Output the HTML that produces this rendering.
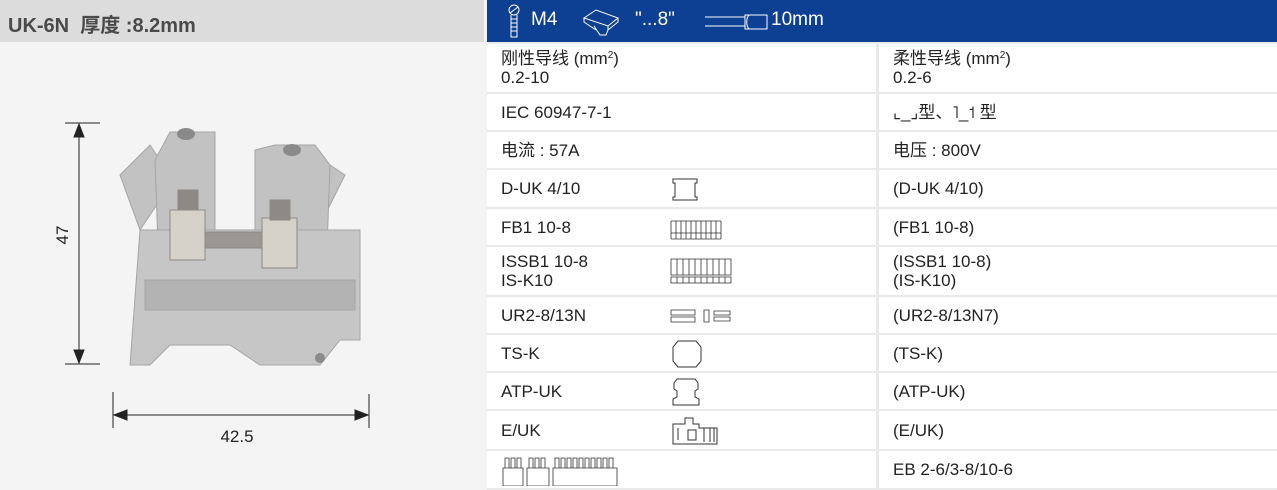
<!DOCTYPE html>
<html><head><meta charset="utf-8"><style>
*{margin:0;padding:0;box-sizing:border-box}
body{width:1277px;height:490px;background:#f4f4f4;position:relative;overflow:hidden;font-family:"Liberation Sans","Noto Sans CJK SC",sans-serif;color:#222}
.hl{position:absolute;left:0;top:0;width:484px;height:42px;background:#dcdcdc;font-weight:bold;font-size:20px;color:#4a4a4a;padding:9px 0 0 8px}
.hb{position:absolute;left:487px;top:0;width:790px;height:42px;background:#0d3f92;color:#fff;font-size:19px}
.hb span{position:absolute;top:9px}
.tbl{position:absolute;left:487px;top:42px;width:790px;height:448px;background:#eaeaea}
.r{position:absolute;left:0;width:790px}
.c{position:absolute;top:0;bottom:0;background:#fff;font-size:17px;line-height:19px;padding:0 0 0 14px;display:flex;align-items:center}
.c1{left:0;width:389px}.c2{left:392px;width:398px}
sup{font-size:10px;line-height:0;vertical-align:6px}
.ic{position:absolute;left:183px}
</style></head><body>
<div class="hl">UK-6N&nbsp; 厚度 :8.2mm</div>
<div class="hb">
<svg style="position:absolute;left:20px;top:4px" width="14" height="34" viewBox="0 0 14 34" fill="none" stroke="#fff" stroke-width="1"><ellipse cx="7" cy="6" rx="5" ry="5"/><path d="M3 9l8-6M4 11v22h6V11M4 15h6M4 19h6M4 23h6M4 27h6"/></svg>
<span style="left:44px">M4</span>
<svg style="position:absolute;left:95px;top:8px" width="40" height="28" viewBox="0 0 40 28" fill="none" stroke="#fff" stroke-width="1"><path d="M2 10l12-8 22 8-10 8zM2 10v4l12 8M26 18v4l10-8v-4M12 18l6 9h6l2-5"/></svg>
<span style="left:148px">"...8"</span>
<svg style="position:absolute;left:218px;top:10px" width="66" height="22" viewBox="0 0 66 22" fill="none" stroke="#fff" stroke-width="1"><path d="M0 7h40M0 16h40M40 5h22v14H40zM44 5c-3 3-3 11 0 14"/></svg>
<span style="left:284px">10mm</span>
</div>
<div class="tbl">
<div class="r" style="top:2px;height:48px"><div class="c c1"><div>刚性导线 (mm<sup>2</sup>)<br>0.2-10</div></div><div class="c c2"><div>柔性导线 (mm<sup>2</sup>)<br>0.2-6</div></div></div>
<div class="r" style="top:52px;height:36px"><div class="c c1"><div>IEC 60947-7-1</div></div><div class="c c2"><div>⌞_⌟型、˥_˦ 型</div></div></div>
<div class="r" style="top:90px;height:36px"><div class="c c1"><div>电流 : 57A</div></div><div class="c c2"><div>电压 : 800V</div></div></div>
<div class="r" style="top:128px;height:37px"><div class="c c1"><div>D-UK 4/10</div><svg class="ic" style="top:6px" width="30" height="26" viewBox="0 0 30 26" fill="none" stroke="#333"><path d="M3 3h24v4h-2v14h2v3H3v-3h2V7H3z"/></svg></div><div class="c c2"><div>(D-UK 4/10)</div></div></div>
<div class="r" style="top:167px;height:36px"><div class="c c1"><div>FB1 10-8</div><svg class="ic" style="top:10px" width="52" height="22" viewBox="0 0 52 22" fill="none" stroke="#333" stroke-width=".8"><path d="M1 2h50M1 14h50M1 20h50M1 2v18M51 2v18M6 2v18M11 2v18M16 2v18M21 2v18M26 2v18M31 2v18M36 2v18M41 2v18M46 2v18"/></svg></div><div class="c c2"><div>(FB1 10-8)</div></div></div>
<div class="r" style="top:205px;height:48px"><div class="c c1"><div>ISSB1 10-8<br>IS-K10</div><svg class="ic" style="top:10px" width="62" height="28" viewBox="0 0 62 28" fill="none" stroke="#333" stroke-width=".8"><path d="M1 2h60v16H1zM1 20h60v6H1zM7 2v16M13 2v16M19 2v16M25 2v16M31 2v16M37 2v16M43 2v16M49 2v16M55 2v16M7 20v6M13 20v6M19 20v6M25 20v6M31 20v6M37 20v6M43 20v6M49 20v6M55 20v6"/></svg></div><div class="c c2"><div>(ISSB1 10-8)<br>(IS-K10)</div></div></div>
<div class="r" style="top:255px;height:36px"><div class="c c1"><div>UR2-8/13N</div><svg class="ic" style="top:11px" width="62" height="16" viewBox="0 0 62 16" fill="none" stroke="#333" stroke-width=".8"><path d="M1 2h24v5H1zM1 9h24v5H1zM34 2h5v12h-5zM44 3h16v4H44zM44 9h16v4H44z"/></svg></div><div class="c c2"><div>(UR2-8/13N7)</div></div></div>
<div class="r" style="top:293px;height:36px"><div class="c c1"><div>TS-K</div><svg class="ic" style="top:4px" width="34" height="30" viewBox="0 0 34 30" fill="none" stroke="#333"><path d="M8 2h18l5 6v14l-5 6H8l-5-6V8z"/></svg></div><div class="c c2"><div>(TS-K)</div></div></div>
<div class="r" style="top:331px;height:36px"><div class="c c1"><div>ATP-UK</div><svg class="ic" style="top:4px" width="34" height="30" viewBox="0 0 34 30" fill="none" stroke="#333"><path d="M7 2h18l3 4v6l-3 2v6l4 2v6H3v-6l4-2v-6l-3-2V6z"/></svg></div><div class="c c2"><div>(ATP-UK)</div></div></div>
<div class="r" style="top:369px;height:38px"><div class="c c1"><div>E/UK</div><svg class="ic" style="top:3px" width="50" height="32" viewBox="0 0 50 32" fill="none" stroke="#333"><path d="M3 10h12V4h8v6h6v4h18v16H3zM8 14v12M18 16h8v10h-8zM34 14v14M40 14v14M44 14v14"/></svg></div><div class="c c2"><div>(E/UK)</div></div></div>
<div class="r" style="top:409px;height:37px"><div class="c c1"><svg width="118" height="32" viewBox="0 0 118 32" fill="none" stroke="#333" stroke-width=".8"><path d="M2 14h20v18H2zM26 14h22v18H26zM52 14h64v18H52zM4 4h4v10H4zM10 4h4v10h-4zM16 4h4v10h-4zM28 4h4v10h-4zM34 4h4v10h-4zM40 4h4v10h-4zM54 4h4v10h-4zM60 4h4v10h-4zM66 4h4v10h-4zM72 4h4v10h-4zM78 4h4v10h-4zM84 4h4v10h-4zM90 4h4v10h-4zM96 4h4v10h-4zM102 4h4v10h-4zM108 4h4v10h-4z"/></svg></div><div class="c c2"><div>EB 2-6/3-8/10-6</div></div></div>
</div>
<svg style="position:absolute;left:0;top:42px" width="484" height="448" viewBox="0 42 484 448">
<g stroke="#222" stroke-width="1" fill="#222">
<line x1="65" y1="123" x2="100" y2="123"/><line x1="65" y1="364" x2="100" y2="364"/>
<line x1="79" y1="130" x2="79" y2="357"/><path d="M79 124l-5 13h10zM79 363l-5-13h10z"/>
<line x1="113" y1="392" x2="113" y2="428"/><line x1="369" y1="394" x2="369" y2="428"/>
<line x1="120" y1="415" x2="362" y2="415"/><path d="M114 415l13-5v10zM368 415l-13-5v10z"/>
</g>
<text x="68" y="235" transform="rotate(-90 68 235)" text-anchor="middle" font-size="17" fill="#222" font-family="Liberation Sans">47</text>
<text x="237" y="442" text-anchor="middle" font-size="17" fill="#222" font-family="Liberation Sans">42.5</text>
<g fill="#c2c2c2" stroke="#a5a5a5" stroke-width="1">
<path d="M120 175l30-30 10 15v40l-20 30z"/>
<path d="M345 175l-30-20-10 20 20 40z"/>
<path d="M155 160l15-28h45v170h-55z"/>
<path d="M255 150l20-5h40l15 20-5 140h-70z"/>
<path d="M140 230h220v110h-20l-20 25h-60l-30-20h-60l-20 20h-20z" fill="#c6c6c6"/>
<path d="M145 280h210v30H145z" fill="#b3b3b3"/>
</g>
<g fill="#d6d1c9" stroke="#8d8a85">
<rect x="170" y="210" width="35" height="50"/><rect x="262" y="218" width="35" height="50"/>
<rect x="205" y="232" width="57" height="16" fill="#9b9892"/>
<rect x="178" y="190" width="20" height="20" fill="#8d8a85"/><rect x="270" y="200" width="20" height="20" fill="#8d8a85"/>
</g>
<g fill="#8a8a8a"><ellipse cx="186" cy="134" rx="9" ry="6"/><ellipse cx="292" cy="150" rx="9" ry="6"/><circle cx="320" cy="358" r="5"/></g>
</svg>
</body></html>
